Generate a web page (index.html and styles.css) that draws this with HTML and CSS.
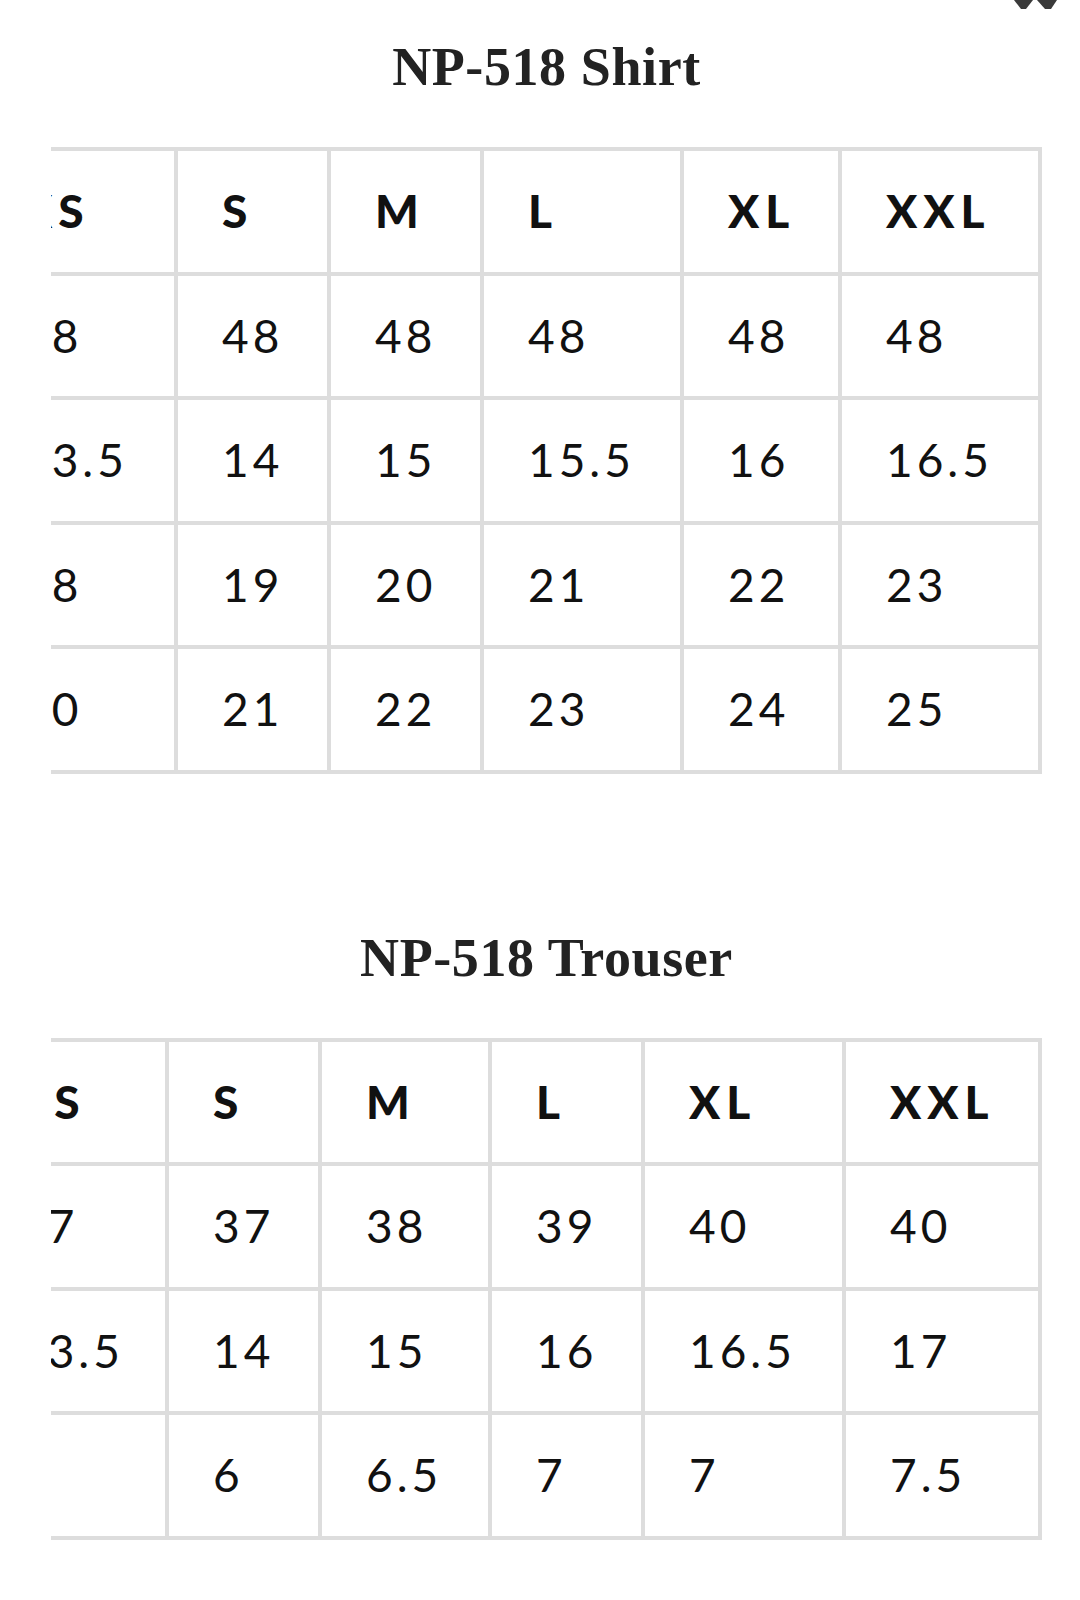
FILE: index.html
```html
<!DOCTYPE html>
<html lang="en">
<head>
<meta charset="utf-8">
<title>NP-518 Size Chart</title>
<link rel="stylesheet" href="styles.css">
</head>
<body>
<button class="close" type="button" aria-label="Close">
  <svg viewBox="0 0 50 12" width="50" height="12" aria-hidden="true">
    <polygon points="3,0 22,0 15,9 10,9"/>
    <polygon points="26,0 46,0 40,9 34,9"/>
  </svg>
</button>
<main class="page">
  <section class="chart">
    <h2 class="chart-title">NP-518 Shirt</h2>
    <div class="scroller">
      <div class="grid grid-shirt" role="table">
        <div class="cell head first">XS</div><div class="cell head">S</div><div class="cell head">M</div><div class="cell head">L</div><div class="cell head">XL</div><div class="cell head">XXL</div>
        <div class="cell first">48</div><div class="cell">48</div><div class="cell">48</div><div class="cell">48</div><div class="cell">48</div><div class="cell">48</div>
        <div class="cell first">13.5</div><div class="cell">14</div><div class="cell">15</div><div class="cell">15.5</div><div class="cell">16</div><div class="cell">16.5</div>
        <div class="cell first">18</div><div class="cell">19</div><div class="cell">20</div><div class="cell">21</div><div class="cell">22</div><div class="cell">23</div>
        <div class="cell first">20</div><div class="cell">21</div><div class="cell">22</div><div class="cell">23</div><div class="cell">24</div><div class="cell">25</div>
      </div>
    </div>
  </section>
  <section class="chart">
    <h2 class="chart-title">NP-518 Trouser</h2>
    <div class="scroller">
      <div class="grid grid-trouser" role="table">
        <div class="cell head first">XS</div><div class="cell head">S</div><div class="cell head">M</div><div class="cell head">L</div><div class="cell head">XL</div><div class="cell head">XXL</div>
        <div class="cell first">37</div><div class="cell">37</div><div class="cell">38</div><div class="cell">39</div><div class="cell">40</div><div class="cell">40</div>
        <div class="cell first">13.5</div><div class="cell">14</div><div class="cell">15</div><div class="cell">16</div><div class="cell">16.5</div><div class="cell">17</div>
        <div class="cell first"></div><div class="cell">6</div><div class="cell">6.5</div><div class="cell">7</div><div class="cell">7</div><div class="cell">7.5</div>
      </div>
    </div>
  </section>
</main>
</body>
</html>
```

FILE: styles.css
```css
html, body {
  margin: 0;
  padding: 0;
  background: #ffffff;
}

body {
  position: relative;
  min-height: 1600px;
}

.close {
  position: absolute;
  top: 0;
  left: 1011px;
  padding: 0;
  margin: 0;
  border: 0;
  background: transparent;
  line-height: 0;
}

.close svg {
  display: block;
  fill: #3a3a3a;
}

.page {
  width: 991px;
  margin-left: 51px;
  padding-top: 37px;
  display: flex;
  flex-direction: column;
  gap: 154px;
}

.chart-title {
  margin: 0 0 50px;
  font-family: "Liberation Serif", "Times New Roman", serif;
  font-weight: 700;
  font-size: 54px;
  line-height: 60px;
  letter-spacing: 0.6px;
  text-align: center;
  color: #222222;
}

.scroller {
  display: flex;
  justify-content: flex-end;
  overflow: hidden;
}

.grid {
  flex: none;
  display: grid;
  grid-auto-rows: 124.5px;
  border-top: 4px solid #dddddd;
}

.grid-shirt {
  grid-template-columns: 205px 153px 153px 200px 158px 200px;
}

.grid-trouser {
  grid-template-columns: 200px 153px 170px 153px 201px 196px;
}

.cell {
  box-sizing: border-box;
  display: flex;
  align-items: center;
  padding-left: 44px;
  border-right: 4px solid #dddddd;
  border-bottom: 4px solid #dddddd;
  font-family: Lato, "Noto Sans", sans-serif;
  font-weight: 400;
  font-size: 46px;
  line-height: 1;
  letter-spacing: 4px;
  color: #111111;
  white-space: nowrap;
}

.cell.first {
  border-left: 4px solid #dddddd;
}

.cell.head {
  font-weight: 900;
  letter-spacing: 6px;
}
```
